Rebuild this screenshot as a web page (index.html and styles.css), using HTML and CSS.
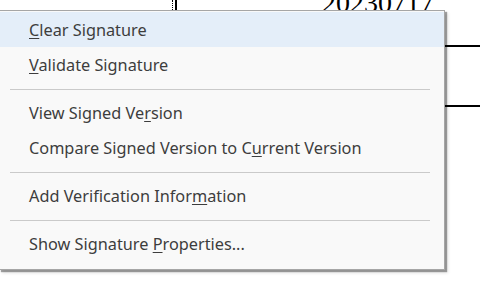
FILE: index.html
```html
<!DOCTYPE html>
<html lang="en">
<head>
  <meta charset="UTF-8">
  <title>Signature menu</title>
  <link rel="stylesheet" href="styles.css">
</head>
<body>
  <div class="page">
    <!-- document behind the menu -->
    <div class="doc-rule"></div>
    <div class="doc-date">20230717</div>
    <div class="doc-line doc-line-top"></div>
    <div class="doc-line doc-line-mid"></div>

    <!-- context menu -->
    <ul class="menu">
      <li class="item active"><u>C</u>lear Signature</li>
      <li class="item"><u>V</u>alidate Signature</li>
      <li class="sep"></li>
      <li class="item">View Signed Ve<u>r</u>sion</li>
      <li class="item">Compare Signed Version to C<u>u</u>rrent Version</li>
      <li class="sep"></li>
      <li class="item">Add Verification Infor<u>m</u>ation</li>
      <li class="sep"></li>
      <li class="item">Show Signature <u>P</u>roperties...</li>
    </ul>
  </div>
</body>
</html>
```

FILE: styles.css
```css
body {
  margin: 0;
  background: #fff;
  font-family: 'Noto Sans', 'Open Sans', sans-serif;
}

.page {
  position: relative;
  width: 480px;
  height: 295px;
  overflow: hidden;
}

.doc-rule {
  position: absolute;
  left: 172px;
  top: 0;
  width: 5px;
  height: 12px;
  border-left: 1px dotted #000;
  border-right: 2px solid #000;
  box-sizing: border-box;
}

.doc-date {
  position: absolute;
  left: 322px;
  top: -13px;
  font-family: 'Liberation Serif', serif;
  font-size: 28px;
  color: #000;
}

.doc-line {
  position: absolute;
  left: 440px;
  width: 40px;
  height: 2px;
  background: #000;
}

.doc-line-top { top: 45px; }
.doc-line-mid { top: 105px; }

.menu {
  position: absolute;
  left: -1px;
  top: 10px;
  width: 444px;
  margin: 0;
  padding: 1px 0 8px;
  list-style: none;
  background: #f9f9f9;
  border: 1px solid #a6a6a6;
  box-shadow: 2px 2px 1px rgba(0, 0, 0, 0.35), 3px 3px 3px rgba(0, 0, 0, 0.12);
}

.item {
  height: 35px;
  line-height: 37px;
  padding-left: 29px;
  font-size: 16.3px;
  color: #3d3d3d;
  white-space: nowrap;
  overflow: hidden;
}

.item u {
  text-underline-offset: 2px;
}

.item.active {
  background: #e4eef9;
}

.sep {
  height: 1px;
  margin: 7px 14px 5px 10px;
  background: #cacaca;
}
```
